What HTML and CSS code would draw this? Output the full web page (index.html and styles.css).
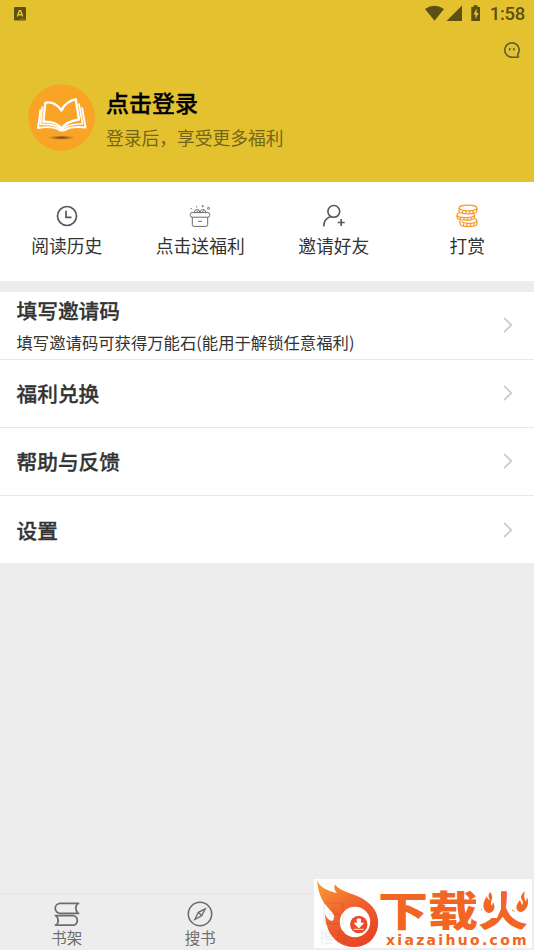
FILE: index.html
```html
<!DOCTYPE html>
<html lang="zh-CN">
<head>
<meta charset="utf-8">
<title>我的</title>
<link rel="stylesheet" href="styles.css">
</head>
<body>
<div class="app">
  <header class="header">
    <div class="status">
      <svg class="status-app" width="12" height="14" viewBox="0 0 12 14"><rect width="12" height="13.5" rx="1.2" fill="#5d5015"/><path d="M3.3 9.5 5.3 3.7h1.4l2 5.8M4.3 7.7h3.4" fill="none" stroke="#e4c22f" stroke-width="1.4"/><path d="M6 12h5" stroke="#a58d22" stroke-width=".8"/></svg>
      <div class="status-right">
        <svg width="58" height="17" viewBox="0 0 58 17" fill="#5d5015"><path d="M0 4.1Q9.5-2.7 19 4.1L9.5 15.7Z"/><path d="M21.5 16H37V.5Z"/><path d="M46.3 2h2.2V.2h4V2h2.5v14h-8.7Z"/><path d="m51.7 3.5-3.3 6h2v4.4l3.3-6h-2Z" fill="#e4c22f"/></svg>
        <span class="clock">1:58</span>
      </div>
    </div>
    <div class="tools">
      <svg width="18" height="18" viewBox="0 0 18 18" fill="none" stroke="#5e5836" stroke-width="1.5"><path d="M15.7 16.2H9A7.2 7.2 0 1 1 14.6 13.5L15.7 16.2"/><path d="M6.7 7v2.5M10.8 7v2.5"/></svg>
    </div>
    <div class="profile">
      <svg class="avatar" width="67" height="67" viewBox="0 0 67 67">
        <defs><radialGradient id="shade"><stop offset="0" stop-color="#664011"/><stop offset=".45" stop-color="#9c6118" stop-opacity=".75"/><stop offset="1" stop-color="#f9a327" stop-opacity="0"/></radialGradient></defs>
        <circle cx="33.5" cy="33.5" r="33.3" fill="#f9a327"/>
        <ellipse cx="33.5" cy="53.7" rx="16" ry="2.5" fill="url(#shade)"/>
        <g fill="none" stroke="#fff" stroke-linejoin="round"><path d="M33.5 26.5C29 20 24 17.3 17.3 18.8L15.3 37.8Q27 37 33.7 44.5 38 37.5 51 35.5L47.8 15.2Q37 18 33.5 26.5Z" stroke-width="2.3"/><path d="M14.3 22.5 12.5 40.5Q27 39.5 33.7 46 40 39.5 54.5 40L51 19.5" stroke-width="1.6"/><path d="M12.5 25.5 10 44Q25 41.5 32 46.5h4Q43 41.5 57.5 43.5L54 23.5" stroke-width="1.9"/></g>
      </svg>
      <div class="who"><div class="login">点击登录</div><div class="hint">登录后，享受更多福利</div></div>
    </div>
  </header>

  <nav class="actions">
    <a class="action"><svg width="24" height="24" viewBox="0 0 24 24" fill="none" stroke="#57575a" stroke-width="1.7"><circle cx="12" cy="12" r="9.5"/><path d="M11 6.7v6.6h5.5"/></svg><span>阅读历史</span></a>
    <a class="action"><svg width="24" height="24" viewBox="0 0 24 24" fill="none" stroke="#6b6b6b" stroke-width="1"><rect x="2.3" y="8.6" width="19.4" height="4.6" rx="1.8"/><path d="M4.3 13.3v7.3q0 1.8 1.8 1.8h11.8q1.8 0 1.8-1.8v-7.3M10 17.3h4M6.2 8.5q.3-3.3 3.3-3 2.2.3 2.5 3 .3-2.7 2.5-3 3-.3 3.3 3M8.5 8.4l2-2.3M14 8.4l2-2.3"/><circle cx="14.7" cy="2.2" r=".7"/><circle cx="20.5" cy="4.3" r="1"/><path d="m2.7 4 1.5 1.5M8 2.8h1.2"/></svg><span>点击送福利</span></a>
    <a class="action"><svg width="24" height="24" viewBox="0 0 24 24" fill="none" stroke="#57575a" stroke-width="1.6"><circle cx="11.8" cy="7.4" r="5.9"/><path d="M1.7 22.5c.1-5.5 2.3-8.5 6.8-10.1M19.2 15v7M15.7 18.5h7"/></svg><span>邀请好友</span></a>
    <a class="action"><svg width="24" height="24" viewBox="0 0 24 24" fill="none" stroke="#f99a2b" stroke-width="1.25"><ellipse cx="13" cy="4" rx="8.9" ry="2.8"/><path d="M4.1 4v3c0 3.7 17.8 3.7 17.8 0V4M7.5 6.6v2.7M11 7v2.7M14.5 7v2.7M18 6.6v2.4"/><path d="M4.2 8.7Q2 9.4 2 11v2.4c0 3.8 17.4 3.7 17.4 0V10M2 11c0 3.4 17.4 3.4 17.4 0M5.5 13.4v2.7M9 14v2.5M12.5 14v2.5M16 13.4v2.4"/><path d="M5 16.4v3.4c0 3.8 17 3.8 17 0v-3c0-1-.8-1.9-2.6-2.4M6.5 17.8c4 2.5 15.5 2 15.5-1M8.5 19.5v2.3M12 19.8v2.7M15.5 19.8v2.7M19 19v2.6"/></svg><span>打赏</span></a>
  </nav>

  <main class="list">
    <a class="row"><div><div class="title">填写邀请码</div><div class="sub">填写邀请码可获得万能石(能用于解锁任意福利)</div></div><svg class="arrow" width="12" height="18" viewBox="0 0 12 18"><path d="m2 1.8 7.3 7.2L2 16.2"/></svg></a>
    <a class="row"><div class="title">福利兑换</div><svg class="arrow" width="12" height="18" viewBox="0 0 12 18"><path d="m2 1.8 7.3 7.2L2 16.2"/></svg></a>
    <a class="row"><div class="title">帮助与反馈</div><svg class="arrow" width="12" height="18" viewBox="0 0 12 18"><path d="m2 1.8 7.3 7.2L2 16.2"/></svg></a>
    <a class="row"><div class="title">设置</div><svg class="arrow" width="12" height="18" viewBox="0 0 12 18"><path d="m2 1.8 7.3 7.2L2 16.2"/></svg></a>
  </main>

  <nav class="tabs">
    <a class="tab"><svg width="28" height="28" viewBox="0 0 28 28" fill="none" stroke="#6d6d6d" stroke-width="1.7"><path d="M26.3 3.3H7.2a5 5 0 0 0 0 10h19.1M24.8 3.3q-4 5 0 10M1.7 15.7h19.1a5 5 0 0 1 0 9.5H1.7M3.2 15.7q4 4.7 0 9.5"/></svg><span>书架</span></a>
    <a class="tab"><svg width="28" height="28" viewBox="0 0 28 28" fill="none" stroke="#6d6d6d" stroke-width="1.6"><circle cx="14" cy="14" r="11.7"/><path d="m19.3 8.8-3.6 7-6.8 3.5 3.5-7ZM12.4 12.3l3.3 3.5" stroke-width="1.4"/></svg><span>搜书</span></a>
    <a class="tab"></a>
    <a class="tab"></a>
  </nav>

  <div class="brand">
    <svg class="flame" width="66" height="69" viewBox="0 0 66 69">
      <defs><linearGradient id="fire" x1="0" y1="0" x2=".65" y2="1"><stop offset="0" stop-color="#f9a131"/><stop offset=".5" stop-color="#f26430"/><stop offset="1" stop-color="#e84624"/></linearGradient></defs>
      <path d="M3 1C6 9 14 12 23 14Q19 10 21 5.5C27 14 42 14 52 22 62 29 65 38 64 47 62 60 53 68 40 68 27 68 18 60 14 50Q11 43 11 35 14 42 18 42 21 40 20 36C17 30 5 25 3 1Z" fill="url(#fire)"/>
      <circle cx="41" cy="43" r="15.2" fill="#fff"/><circle cx="44.8" cy="45.5" r="8.7" fill="#e94b2b"/>
      <path d="M43.2 40h3.3v4.2h3L44.8 49l-4.6-4.8h3ZM39.8 50.3h10" fill="#fff" stroke="#fff" stroke-width=".9"/>
    </svg>
    <div class="ghost"><svg width="22" height="24" viewBox="0 0 22 24" fill="none" stroke="currentColor" stroke-width="1.5"><rect x="1" y="1" width="19" height="21"/><path d="M10.5 6v11M5 11.5h11"/></svg><span>推荐</span></div>
    <div class="wordmark"><div class="name">下载火</div><div class="domain">xiazaihuo.com</div></div>
    <svg class="sparks" width="48" height="28" viewBox="0 0 48 28"><path d="M0 0H19V18L15 27H0ZM29 0H48V24L38 26 29 17Z" fill="#fefefe"/><path d="M8 1Q5 5 8 9 5 8 5 5 0 12 2 18 6 25 11 20 14 16 11 11L10 15Q8 12 10 8 11 4 8 1ZM43 0Q37 5 40 9 42 12 40 14L38 9Q32 16 36 20 41 23 45 16 47 11 45 6L44 11Q41 7 43 0Z" fill="#f26522"/></svg>
  </div>
</div>
</body>
</html>
```
FILE: styles.css
```css
* { box-sizing: border-box; }
body {
  margin: 0;
  font-family: "Noto Sans CJK SC", sans-serif;
  color: #333;
  background: #ededed;
}
.app {
  position: relative;
  display: flex;
  flex-direction: column;
  height: 950px;
  overflow: hidden;
}
svg { display: block; flex: none; }
.header { height: 182px; background: #e4c22f; }
.status {
  display: flex;
  justify-content: space-between;
  height: 28px;
  padding: 5px 9px 0 14px;
}
.status-app { margin-top: 2px; }
.status-right { display: flex; gap: 7px; }
.clock {
  font: 500 18.5px/19px Roboto, sans-serif;
  color: #5d5015;
  letter-spacing: -.3px;
}
.tools { display: flex; justify-content: flex-end; padding: 13px 13px 0 0; }
.profile { display: flex; gap: 11px; padding: 25px 28px 0; }
.login { font-size: 23px; line-height: 32px; font-weight: 500; color: #000; padding-top: 2px; -webkit-text-stroke: .3px #000; }
.hint { font-size: 17.75px; line-height: 28px; padding-top: 5px; color: #756519; }

.actions { display: flex; height: 98.5px; padding-top: 22px; background: #fff; }
.action { flex: 1; display: flex; flex-direction: column; align-items: center; font-size: 17.8px; line-height: 26px; gap: 4px; }

.list { margin-top: 11px; background: #fff; }
.row {
  display: flex;
  align-items: center;
  justify-content: space-between;
  height: 68.2px;
  padding: 0 20px 0 16.5px;
  border-bottom: 1.5px solid #e9e9e9;
}
.row:first-child { padding-bottom: 1px; }
.row:last-child { border: 0; height: 67px; padding-bottom: 0; }
.title { font-size: 20.7px; line-height: 32px; font-weight: 500; -webkit-text-stroke: .3px #333; }
.sub { font-size: 16.35px; line-height: 26px; margin-top: 3px; }
.arrow { fill: none; stroke: #ccc; stroke-width: 1.8; }

.tabs { display: flex; height: 57px; margin-top: auto; padding-top: 6px; border-top: 1px solid #e4e4e4; }
.tab { flex: 1; display: flex; flex-direction: column; align-items: center; font-size: 15.5px; line-height: 18px; color: #6d6d6d; }

.brand {
  position: absolute;
  left: 314px;
  top: 879px;
  width: 218px;
  height: 69px;
  display: flex;
  background: #fefefe;
  color: #f26522;
}
.wordmark { width: 152px; padding-top: 8px; }
.name {
  height: 42px;
  margin-left: -2px;
  font-size: 50px;
  line-height: 42px;
  font-weight: 900;
  white-space: nowrap;
  transform: scaleY(.82);
}
.domain {
  margin-top: 4px;
  font: bold 14px/15px "DejaVu Sans", sans-serif;
  letter-spacing: 2.3px;
  padding-left: 6px;
  white-space: nowrap;
}
.ghost {
  position: absolute;
  left: 5px;
  top: 23px;
  width: 30px;
  display: flex;
  flex-direction: column;
  align-items: center;
  font-size: 15px;
  line-height: 22px;
  color: #000;
  opacity: .06;
}
.sparks { position: absolute; left: 168px; top: 12px; }
```
